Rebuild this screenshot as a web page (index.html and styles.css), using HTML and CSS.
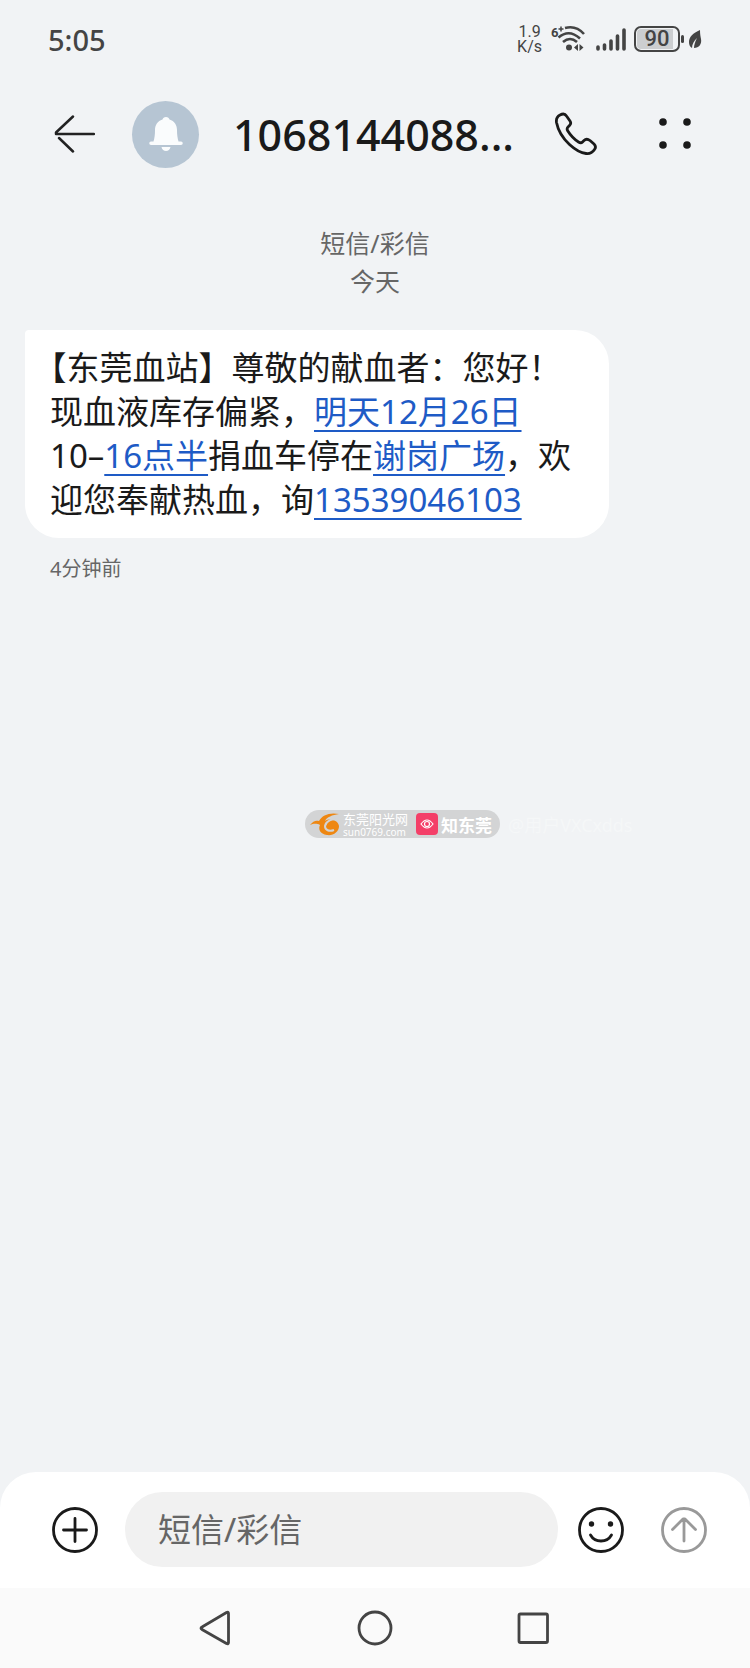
FILE: index.html
```
<!DOCTYPE html>
<html lang="zh-CN">
<head>
  <meta charset="utf-8">
  <meta name="viewport" content="width=device-width, initial-scale=1">
  <title>短信/彩信</title>
  <link rel="stylesheet" href="styles.css">
</head>
<body>
  <div class="status-bar">
    <span class="clock">5:05</span>
    <div class="status-icons">
      <span class="net-speed">1.9<br>K/s</span>
      <svg class="wifi" width="36" height="28" viewBox="0 0 36 28">
        <text x="1" y="12" class="wifi-gen">6</text>
        <path d="M8.500 4h5M11 1.500v5" stroke="#444" stroke-width="1.500"/>
        <g fill="none" stroke="#444" stroke-width="2.600">
          <path d="M15 3Q26 0 34 9"/>
          <path d="M8.500 12.500Q19 3.500 30 13.500"/>
          <path d="M13 17Q20 11 27 17"/>
        </g>
        <circle cx="19" cy="22.500" r="3" fill="#444"/>
        <path d="M28 19v7l-4-3.500zM29.500 19v7l4-3.500z" fill="#444"/>
      </svg>
      <svg width="32" height="28" viewBox="0 0 32 28">
        <g stroke="#444" stroke-width="3.600" stroke-linecap="round">
          <path d="M4 22v2M10.500 20v4M17 16v8M23.500 11v13M30 5v19"/>
        </g>
      </svg>
      <div class="battery"><span class="battery-level">90</span></div>
      <svg class="leaf" width="14" height="22" viewBox="0 0 14 22">
        <path d="M12 2C5 5 1 9 1 14c0 3 1 5 3 6 0-4 2-7 5-10-2 4-3 7-3 10 5 0 8-4 7-9-.5-3-1-5-1-9z" fill="#444"/>
      </svg>
    </div>
  </div>

  <header class="header">
    <button class="icon-button" aria-label="返回">
      <svg width="42" height="42" viewBox="0 0 42 42" fill="none" stroke="#222" stroke-width="2.500" stroke-linecap="round" stroke-linejoin="round">
        <path d="M20 3.500L3 19.500l0 1.500H41M6 25l14 13.500"/>
      </svg>
    </button>
    <div class="avatar">
      <svg width="34" height="36" viewBox="0 0 34 36" fill="#fafcfd">
        <path d="M17 1c2 0 3 1 3.500 2.500 5 1.500 7.500 5.500 7.500 10.500 0 5 .500 8 1.500 11.500H32a1.500 1.500 0 0 1 0 3.500H2a1.500 1.500 0 0 1 0-3.500h2.500C5.500 22 6 19 6 14 6 9 8.500 5 13.500 3.500 14 2 15 1 17 1z"/>
        <path d="M12.500 31h9c-.5 2.500-2.300 4-4.500 4s-4-1.500-4.500-4z"/>
      </svg>
    </div>
    <h1 class="title">1068144088...</h1>
    <button class="icon-button call" aria-label="拨打电话">
      <svg width="44" height="44" viewBox="0 0 44 44" fill="none" stroke="#1a1a1a" stroke-width="2.800" stroke-linejoin="round">
        <path d="M6 3C3 4.500 2 7 2.500 10.500C4 18 8.500 26 15.500 32.500C21.500 38 27 41 32 41.500C35.500 42 38.500 40.500 40.500 37.500C42 35.500 41.500 33.500 40 32L36 28.500C34 27 31.500 27 30 28.500L28.500 30C27.500 31 26 31 24.500 30C20.500 27.500 16 22.500 13.500 18.500C12.800 17 13 16 14 15L15.500 13.500C17 12 17 10.500 16 9L12.500 4C11 1.500 8.500 1.500 6 3Z"/>
      </svg>
    </button>
    <button class="icon-button" aria-label="更多">
      <svg width="38" height="42" viewBox="0 0 38 42" fill="#1a1a1a">
        <circle cx="7" cy="9" r="3.800"/>
        <circle cx="31" cy="9" r="3.800"/>
        <circle cx="7" cy="32" r="3.800"/>
        <circle cx="31" cy="32" r="3.800"/>
      </svg>
    </button>
  </header>

  <main class="conversation">
    <p class="day">短信/彩信<br>今天</p>
    <div class="bubble"><span class="bracket">【</span>东莞血站】尊敬的献血者：您好！现血液库存偏紧，<a href="#">明天12月26日</a><span class="nowrap">10–<a href="#">16点半</a></span>捐血车停在<a href="#">谢岗广场</a>，欢迎您奉献热血，询<a href="tel:13539046103">13539046103</a></div>
    <p class="sent-time">4分钟前</p>

    <div class="watermark">
      <div class="watermark-pill">
        <svg width="30" height="24" viewBox="0 0 30 24">
          <path d="M0 13C3 9 6 8 9 9C12 3 20 0 29 2C22 3 17 5 15 9C20 6 28 8 29 14C29 20 23 24 17 23C10 22 8 17 10 13C6 11 3 12 0 13Z" fill="#ee8712"/>
          <path d="M29 8C22 6 16 9 15 14C15 18 19 20 24 18" fill="none" stroke="#d3d4d5" stroke-width="2"/>
        </svg>
        <div class="brand">
          <span class="brand-name">东莞阳光网</span>
          <span class="brand-site">sun0769.com</span>
        </div>
        <svg width="22" height="22" viewBox="0 0 22 22">
          <rect width="22" height="22" rx="4" fill="#f43f68"/>
          <g fill="none" stroke="#fff" stroke-width="1.200">
            <path d="M5 11Q11 3 17 11Q11 19 5 11Z"/>
            <circle cx="11" cy="11" r="2.500"/>
          </g>
        </svg>
        <span class="channel">知东莞</span>
      </div>
      <span class="watermark-user">@用户VXCxdds</span>
    </div>
  </main>

  <form class="composer">
    <button type="button" class="icon-button" aria-label="添加">
      <svg width="46" height="46" viewBox="0 0 46 46" fill="none" stroke="#1a1a1a" stroke-width="2.800" stroke-linecap="round">
        <circle cx="23" cy="23" r="21.500"/>
        <path d="M23 11.500v23M11.500 23h23"/>
      </svg>
    </button>
    <input class="message-input" type="text" placeholder="短信/彩信" aria-label="短信/彩信">
    <button type="button" class="icon-button" aria-label="表情">
      <svg width="46" height="46" viewBox="0 0 46 46" fill="none" stroke="#1a1a1a" stroke-width="2.800" stroke-linecap="round">
        <circle cx="23" cy="23" r="21.500"/>
        <path d="M12.500 28C17 36 29 36 33.500 28"/>
        <circle cx="13.500" cy="17" r="2.700" fill="#1a1a1a" stroke="none"/>
        <circle cx="32.500" cy="17" r="2.700" fill="#1a1a1a" stroke="none"/>
      </svg>
    </button>
    <button type="button" class="icon-button send" aria-label="发送">
      <svg width="46" height="46" viewBox="0 0 46 46" fill="none" stroke="#999" stroke-width="2.800" stroke-linecap="round" stroke-linejoin="round">
        <circle cx="23" cy="23" r="21.500"/>
        <path d="M23 34V12M11.500 22.500L22 12h2l10.500 10.500"/>
      </svg>
    </button>
  </form>

  <nav class="nav-bar">
    <button class="icon-button" aria-label="后退">
      <svg width="36" height="36" viewBox="0 0 36 36" fill="none" stroke="#444" stroke-width="2.800" stroke-linejoin="round">
        <path d="M27.500 2.500q2-1 2 1v29q0 2-2 1L3 19.500q-2-1.500 0-2.500z"/>
      </svg>
    </button>
    <button class="icon-button" aria-label="主页">
      <svg width="36" height="36" viewBox="0 0 36 36" fill="none" stroke="#444" stroke-width="2.800">
        <circle cx="18" cy="18" r="16"/>
      </svg>
    </button>
    <button class="icon-button" aria-label="最近任务">
      <svg width="36" height="36" viewBox="0 0 36 36" fill="none" stroke="#444" stroke-width="2.800">
        <rect x="4" y="4" width="28.500" height="28.500" rx="1.500"/>
      </svg>
    </button>
  </nav>
</body>
</html>
```
FILE: styles.css
```
* {
  box-sizing: border-box;
}

body {
  display: flex;
  flex-direction: column;
  min-height: 100vh;
  margin: 0;
  background-color: #f1f3f5;
  color: #1a1a1a;
  font-family: "Noto Sans", "Noto Sans CJK SC", sans-serif;
}

svg {
  display: block;
}

.icon-button {
  flex: none;
  padding: 0;
  border: none;
  background: none;
  cursor: pointer;
}

.status-bar {
  display: flex;
  justify-content: space-between;
  align-items: center;
  height: 78px;
  padding: 0 48px;
  color: #444;
}

.clock {
  font-size: 29px;
  font-weight: 500;
}

.status-icons {
  display: flex;
  align-items: center;
  gap: 8px;
}

.net-speed {
  font-family: Roboto, sans-serif;
  font-size: 16px;
  line-height: 15px;
  text-align: center;
}

.wifi-gen {
  fill: #444;
  font-family: Roboto, sans-serif;
  font-size: 13px;
  font-weight: 700;
}

.battery {
  position: relative;
  width: 46px;
  height: 26px;
  padding: 1px;
  border: 2px solid #444;
  border-radius: 7px;
}

.battery::after {
  content: "";
  position: absolute;
  top: 7px;
  right: -6px;
  width: 3px;
  height: 8px;
  border-radius: 2px;
  background-color: #444;
}

.battery-level {
  display: block;
  border-radius: 4px;
  background: linear-gradient(to right, #ccced0 90%, transparent 90%);
  font-family: Roboto, sans-serif;
  font-size: 22px;
  font-weight: 500;
  line-height: 20px;
  text-align: center;
}

.header {
  display: flex;
  align-items: center;
  height: 112px;
  padding: 0 56px 0 53px;
}

.avatar {
  display: flex;
  flex: none;
  justify-content: center;
  align-items: center;
  width: 67px;
  height: 67px;
  margin-left: 37px;
  border-radius: 50%;
  background-color: #b6c5d3;
}

.title {
  flex: 1;
  min-width: 0;
  margin: 0 0 0 34px;
  overflow: hidden;
  font-size: 43px;
  font-weight: 500;
  white-space: nowrap;
}

.call {
  margin-right: 58px;
}

.conversation {
  position: relative;
  flex: 1;
  padding: 34px 25px;
}

.day {
  margin: 0;
  color: #666;
  font-size: 25px;
  line-height: 38px;
  text-align: center;
}

.bubble {
  width: fit-content;
  max-width: 584px;
  margin-top: 30px;
  padding: 16px 25px;
  border-radius: 4px 34px 34px 34px;
  background-color: #fff;
  font-size: 33px;
  line-height: 44px;
}

.bubble a {
  color: #1e5bc6;
  text-decoration: underline;
  text-decoration-thickness: 2px;
  text-underline-offset: 6px;
}

.bracket {
  font-feature-settings: "halt";
}

.nowrap {
  white-space: nowrap;
}

.sent-time {
  margin: 16px 25px;
  color: #666;
  font-size: 20px;
  line-height: 30px;
}

.watermark {
  display: flex;
  position: absolute;
  top: 620px;
  left: calc(50% - 70px);
  align-items: center;
  gap: 8px;
}

.watermark-pill {
  display: flex;
  align-items: center;
  gap: 3px;
  height: 28px;
  padding: 0 8px 0 5px;
  border-radius: 14px;
  background-color: #d3d4d5;
  color: #fff;
}

.brand {
  display: flex;
  flex-direction: column;
  width: 70px;
}

.brand-name {
  font-size: 13px;
  line-height: 15px;
  white-space: nowrap;
}

.brand-site {
  font-size: 10px;
  line-height: 10px;
}

.channel {
  font-size: 17px;
  font-weight: 700;
}

.watermark-user {
  color: #f5f7f8;
  font-size: 18px;
}

.composer {
  display: flex;
  align-items: center;
  padding: 20px 43px 21px 52px;
  border-radius: 36px 36px 0 0;
  background-color: #fff;
}

.message-input {
  flex: 1;
  min-width: 0;
  height: 75px;
  margin: 0 20px 0 27px;
  padding: 0 33px;
  border: none;
  border-radius: 38px;
  background-color: #f1f1f1;
  color: #1a1a1a;
  font-family: inherit;
  font-size: 33px;
}

.message-input::placeholder {
  color: #666;
}

.send {
  margin-left: 37px;
}

.nav-bar {
  display: flex;
  justify-content: center;
  align-items: center;
  gap: 122px;
  height: 80px;
  background-color: #fafafa;
}
```
